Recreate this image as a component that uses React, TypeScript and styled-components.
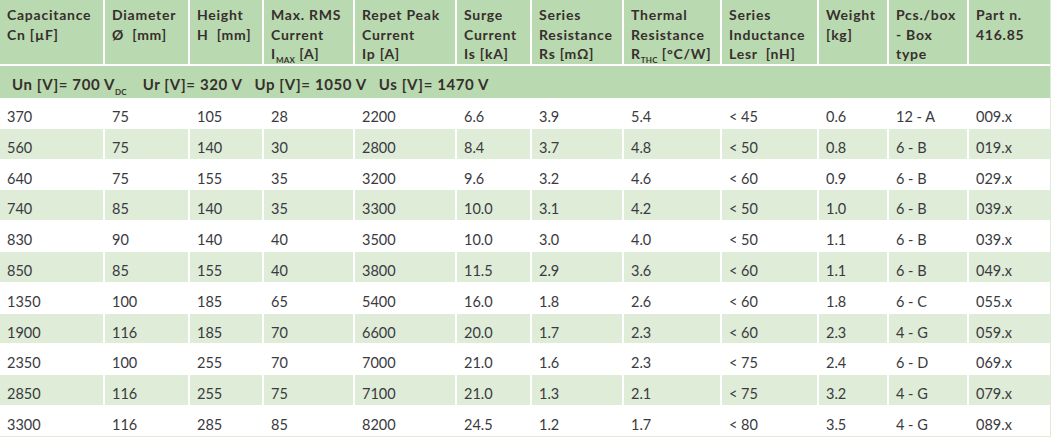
import React from 'react';
import styled, { createGlobalStyle } from 'styled-components';

const COLS = '103px 83px 72px 89px 100px 73px 90px 96px 95px 68px 78px 1fr';

const GlobalStyle = createGlobalStyle`
  html, body {
    margin: 0;
    padding: 0;
    background: #fff;
  }
  body {
    font-family: Lato, "Liberation Sans", sans-serif;
    color: #3b3838;
  }
`;

const Table = styled.div`
  width: 1050px;
  border-right: 1px solid #deecd8;
  border-bottom: 1px solid #deecd8;
  background: #fff;
`;

const HeadRow = styled.div`
  display: grid;
  grid-template-columns: ${COLS};
  column-gap: 2px;
  height: 64px;
  margin-bottom: 2px;
`;

const HeadCell = styled.div`
  background: #b9d9b0;
  padding: 5px 0 0 7px;
  font-size: 14px;
  font-weight: 700;
  line-height: 19.5px;
  letter-spacing: 0.75px;
  white-space: pre;
  color: #372f2d;
`;

const Sub = styled.sub<{ $drop?: number }>`
  font-size: 8px;
  letter-spacing: 0.2px;
  vertical-align: ${props => -(props.$drop ?? 4)}px;
  line-height: 0;
`;

const Ratings = styled.div`
  display: flex;
  align-items: center;
  gap: 12px;
  height: 32px;
  padding: 3px 0 0 12px;
  box-sizing: border-box;
  background: #b9d9b0;
  font-size: 15px;
  font-weight: 700;
  letter-spacing: 0.6px;
  white-space: pre;
  color: #372f2d;
`;

const Rating = styled.span<{ $extra?: boolean }>`
  margin-right: ${props => (props.$extra ? '4px' : '0')};
`;

const Row = styled.div`
  display: grid;
  grid-template-columns: ${COLS};
  column-gap: 2px;
  height: 29.8px;
  margin-bottom: 1px;

  &:last-child {
    margin-bottom: 0;
  }
`;

const Cell = styled.div<{ $shaded: boolean }>`
  background: ${props => (props.$shaded ? '#deecd8' : '#fff')};
  padding: 10px 0 0 7px;
  font-size: 14.5px;
  line-height: 18px;
  white-space: pre;
  color: #3a3a40;
`;

const headers: React.ReactNode[][] = [
  ['Capacitance', 'Cn [µF]'],
  ['Diameter', 'Ø  [mm]'],
  ['Height', 'H  [mm]'],
  ['Max. RMS', 'Current', <>I<Sub>MAX</Sub> [A]</>],
  ['Repet Peak', 'Current', 'Ip [A]'],
  ['Surge', 'Current', 'Is [kA]'],
  ['Series', 'Resistance', 'Rs [mΩ]'],
  ['Thermal', 'Resistance', <>R<Sub>THC</Sub> [°C/W]</>],
  ['Series', 'Inductance', 'Lesr  [nH]'],
  ['Weight', '[kg]'],
  ['Pcs./box', '- Box', 'type'],
  ['Part n.', '416.85'],
];

const rows: string[][] = [
  ['370', '75', '105', '28', '2200', '6.6', '3.9', '5.4', '< 45', '0.6', '12 - A', '009.x'],
  ['560', '75', '140', '30', '2800', '8.4', '3.7', '4.8', '< 50', '0.8', '6 - B', '019.x'],
  ['640', '75', '155', '35', '3200', '9.6', '3.2', '4.6', '< 60', '0.9', '6 - B', '029.x'],
  ['740', '85', '140', '35', '3300', '10.0', '3.1', '4.2', '< 50', '1.0', '6 - B', '039.x'],
  ['830', '90', '140', '40', '3500', '10.0', '3.0', '4.0', '< 50', '1.1', '6 - B', '039.x'],
  ['850', '85', '155', '40', '3800', '11.5', '2.9', '3.6', '< 60', '1.1', '6 - B', '049.x'],
  ['1350', '100', '185', '65', '5400', '16.0', '1.8', '2.6', '< 60', '1.8', '6 - C', '055.x'],
  ['1900', '116', '185', '70', '6600', '20.0', '1.7', '2.3', '< 60', '2.3', '4 - G', '059.x'],
  ['2350', '100', '255', '70', '7000', '21.0', '1.6', '2.3', '< 75', '2.4', '6 - D', '069.x'],
  ['2850', '116', '255', '75', '7100', '21.0', '1.3', '2.1', '< 75', '3.2', '4 - G', '079.x'],
  ['3300', '116', '285', '85', '8200', '24.5', '1.2', '1.7', '< 80', '3.5', '4 - G', '089.x'],
];

const App: React.FC = () => {
  return (
    <>
      <GlobalStyle />
      <Table>
        <HeadRow>
          {headers.map((lines, i) => (
            <HeadCell key={i}>
              {lines.map((line, j) => (
                <div key={j}>{line}</div>
              ))}
            </HeadCell>
          ))}
        </HeadRow>
        <Ratings>
          <Rating $extra>
            Un [V]= 700 V<Sub $drop={5}>DC</Sub>
          </Rating>
          <Rating>Ur [V]= 320 V</Rating>
          <Rating>Up [V]= 1050 V</Rating>
          <Rating>Us [V]= 1470 V</Rating>
        </Ratings>
        {rows.map((row, i) => (
          <Row key={i}>
            {row.map((value, j) => (
              <Cell key={j} $shaded={i % 2 === 1}>
                {value}
              </Cell>
            ))}
          </Row>
        ))}
      </Table>
    </>
  );
};

export default App;
